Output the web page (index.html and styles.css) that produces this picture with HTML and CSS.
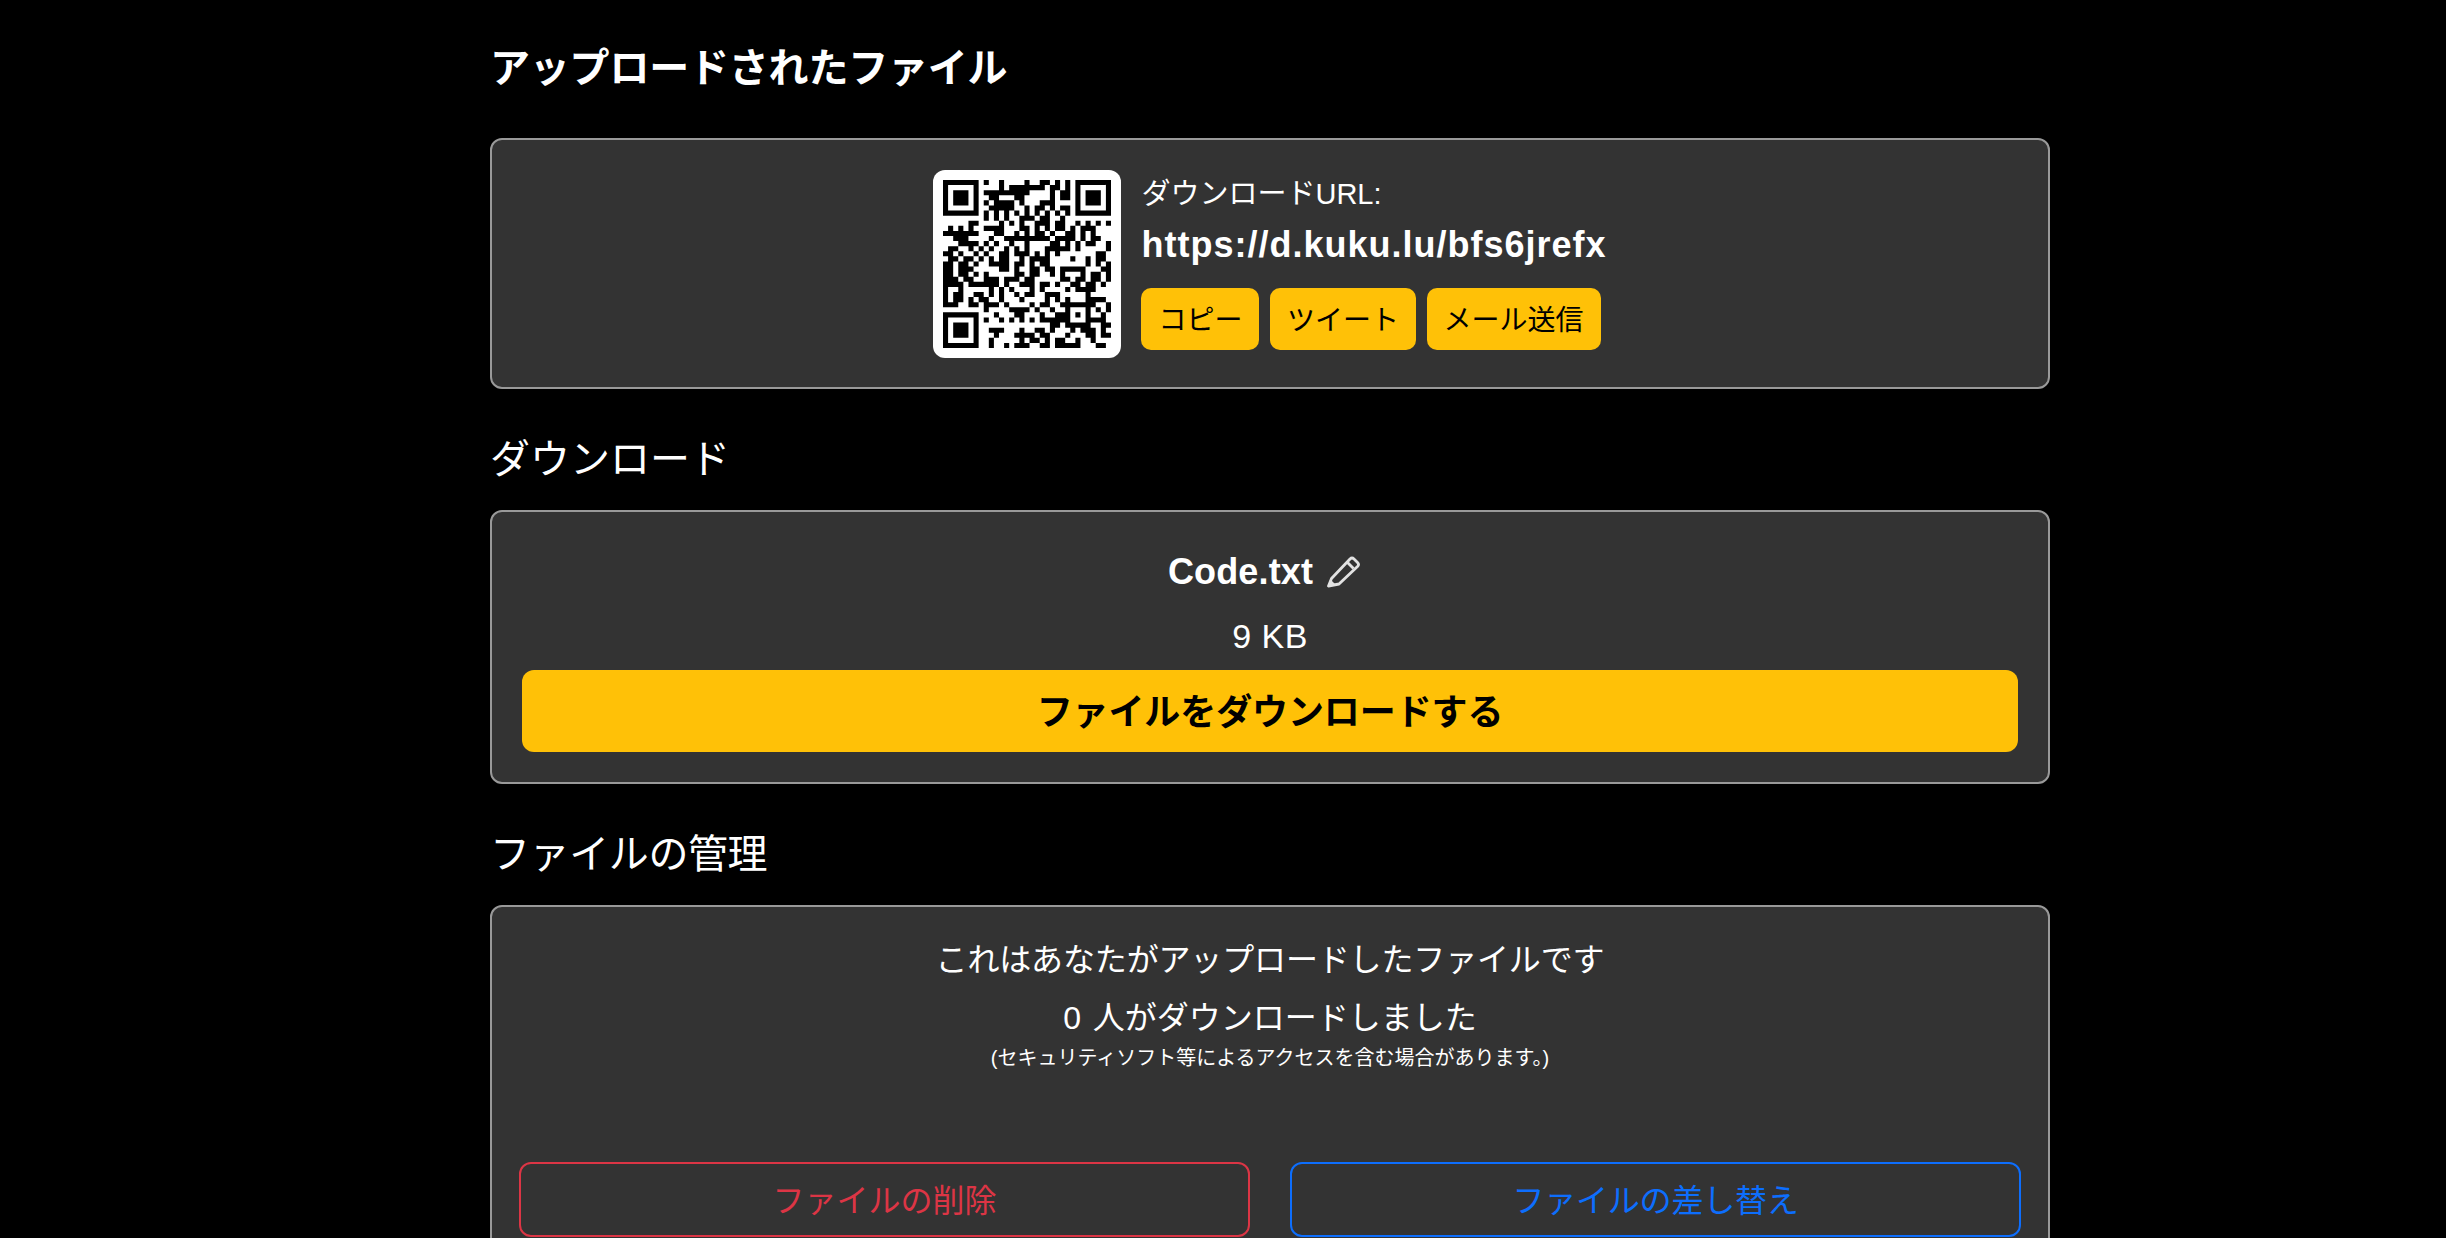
FILE: index.html
```html
<!DOCTYPE html>
<html lang="ja">
<head>
<meta charset="utf-8">
<title>アップロードされたファイル</title>
<link rel="stylesheet" href="styles.css">
</head>
<body>
<main class="page">
  <h1 class="title">アップロードされたファイル</h1>
  <section class="card share">
    <div class="qr"><svg class="qr-code" id="qr" viewBox="0 0 33 33"></svg></div>
    <div class="share-info">
      <div class="share-label">ダウンロードURL:</div>
      <div class="share-url">https://d.kuku.lu/bfs6jrefx</div>
      <div class="share-actions">
        <button class="btn-small">コピー</button>
        <button class="btn-small">ツイート</button>
        <button class="btn-small">メール送信</button>
      </div>
    </div>
  </section>
  <h2 class="section-title wide">ダウンロード</h2>
  <section class="card center">
    <div class="file-name">Code.txt
      <svg class="pencil" viewBox="6 5 34 34"><path class="pencil-line" d="M8.5 36 L11.5 28.5 L30 9 Q32 7 34 9 L37.5 12.5 Q39.5 14.5 37.5 16.5 L19 34 Z"/><path class="pencil-line" d="M27.5 12.5 L33.5 18.5"/><path class="pencil-tip" d="M7.5 37 L10.5 29.5 L15.5 34.5 Z"/></svg>
    </div>
    <div class="file-size">9 KB</div>
    <button class="btn-download">ファイルをダウンロードする</button>
  </section>
  <h2 class="section-title">ファイルの管理</h2>
  <section class="card center manage">
    <div class="line intro">これはあなたがアップロードしたファイルです</div>
    <div class="line count">0 人がダウンロードしました</div>
    <div class="note">(セキュリティソフト等によるアクセスを含む場合があります。)</div>
    <div class="manage-actions">
      <button class="btn-outline danger">ファイルの削除</button>
      <button class="btn-outline primary">ファイルの差し替え</button>
    </div>
  </section>
</main>
<script src="qr.js"></script>
</body>
</html>
```
FILE: styles.css
```css
* { box-sizing: border-box; }
html { overflow: hidden; background: #000; }
body {
  margin: 0;
  background: #000;
  color: #fff;
  font-family: "Liberation Sans", "Noto Sans CJK JP", sans-serif;
  font-size: 32px;
}
button { font-family: inherit; border: 0; cursor: pointer; }
.page { width: 1560px; margin-left: 490px; padding-top: 38px; }
.title { margin: 0 0 40px; font-size: 40px; line-height: 60px; font-weight: 700; letter-spacing: -0.2px; }
.section-title { margin: 40px 0 21px; font-size: 40px; line-height: 60px; font-weight: 400; letter-spacing: -0.4px; }
.wide { letter-spacing: 0; }
.card { background: #333; border: 2px solid #999; border-radius: 12px; padding: 30px; }
.center { text-align: center; }
.share { display: flex; justify-content: center; align-items: flex-start; gap: 20px; height: 251px; }
.qr { width: 188px; height: 188px; background: #fff; border-radius: 12px; display: flex; align-items: center; justify-content: center; }
.qr-code { width: 168px; height: 168px; display: block; }
.share-label { font-size: 29px; line-height: 48px; }
.share-url { font-size: 36px; font-weight: 700; line-height: 54px; letter-spacing: 1px; }
.share-actions { display: flex; gap: 10.5px; margin-top: 16px; }
.btn-small { height: 62px; padding: 0 17px 3px; background: #ffc107; color: #000; font-size: 28px; border-radius: 10px; }
.file-name { font-size: 36px; font-weight: 700; line-height: 60px; display: flex; justify-content: center; align-items: center; gap: 13px; margin-bottom: 10px; letter-spacing: 0.15px; }
.pencil { width: 34px; height: 34px; margin-right: 12px; }
.pencil-line { fill: none; stroke: #e2e2e2; stroke-width: 2.8; stroke-linejoin: round; }
.pencil-tip { fill: #e2e2e2; }
.file-size { font-size: 34px; line-height: 48px; margin-bottom: 10px; letter-spacing: 0.5px; }
.btn-download { display: block; width: 100%; height: 82px; padding: 0 0 4px; background: #ffc107; color: #000; font-size: 36px; font-weight: 700; border-radius: 12px; letter-spacing: -0.1px; }
.manage { padding-top: 29px; }
.line { line-height: 48px; margin-bottom: 10px; }
.intro { letter-spacing: -0.15px; }
.count { margin-bottom: 1px; word-spacing: 3px; }
.note { font-size: 20px; line-height: 30px; }
.manage-actions { display: flex; gap: 40px; margin: 89px -3px 0; }
.btn-outline { flex: 1; height: 75px; padding: 0 0 3px; background: transparent; border: 2px solid; border-radius: 12px; font-size: 32px; }
.danger { color: #dc3545; }
.primary { color: #0d6efd; letter-spacing: -0.2px; }
```
FILE: qr.js
```js
(function () {
  var TEXT = "https://d.kuku.lu/bfs6jrefx";
  var SIZE = 33, DATA_LEN = 36, BLOCKS = 4, ECC = 16, MASK = 5;

  var EXP = [], LOG = [];
  for (var i = 0, v = 1; i < 255; i++) {
    EXP[i] = v; LOG[v] = i;
    v <<= 1; if (v & 256) v ^= 0x11d;
  }
  function mul(a, b) { return a && b ? EXP[(LOG[a] + LOG[b]) % 255] : 0; }

  function generator(deg) {
    var g = [1];
    for (var i = 0; i < deg; i++) {
      var n = new Array(g.length + 1).fill(0);
      for (var j = 0; j < g.length; j++) {
        n[j] ^= g[j];
        n[j + 1] ^= mul(g[j], EXP[i]);
      }
      g = n;
    }
    return g;
  }

  function remainder(data, deg) {
    var g = generator(deg), r = data.concat(new Array(deg).fill(0));
    for (var i = 0; i < data.length; i++) {
      var c = r[i];
      if (c) for (var j = 0; j < g.length; j++) r[i + j] ^= mul(g[j], c);
    }
    return r.slice(data.length);
  }

  function codewords() {
    var bits = [];
    function put(val, n) { for (var i = n - 1; i >= 0; i--) bits.push((val >> i) & 1); }
    put(4, 4); put(TEXT.length, 8);
    for (var i = 0; i < TEXT.length; i++) put(TEXT.charCodeAt(i), 8);
    put(0, 4);
    while (bits.length % 8) bits.push(0);
    var out = [];
    for (i = 0; i < bits.length; i += 8) out.push(parseInt(bits.slice(i, i + 8).join(""), 2));
    for (var p = 0xec; out.length < DATA_LEN; p ^= 0xfd) out.push(p);
    var per = DATA_LEN / BLOCKS, blocks = [], eccs = [];
    for (i = 0; i < BLOCKS; i++) {
      var b = out.slice(i * per, (i + 1) * per);
      blocks.push(b); eccs.push(remainder(b, ECC));
    }
    var res = [];
    for (i = 0; i < per; i++) for (var k = 0; k < BLOCKS; k++) res.push(blocks[k][i]);
    for (i = 0; i < ECC; i++) for (k = 0; k < BLOCKS; k++) res.push(eccs[k][i]);
    return res;
  }

  function masked(x, y) { return x * y % 2 + x * y % 3 == 0; }

  function build() {
    var m = [], fn = [];
    for (var y = 0; y < SIZE; y++) { m.push(new Array(SIZE).fill(false)); fn.push(new Array(SIZE).fill(false)); }
    function set(x, y, d) { m[y][x] = !!d; fn[y][x] = true; }
    function finder(cx, cy) {
      for (var dy = -4; dy <= 4; dy++) for (var dx = -4; dx <= 4; dx++) {
        var xx = cx + dx, yy = cy + dy, d = Math.max(Math.abs(dx), Math.abs(dy));
        if (xx >= 0 && xx < SIZE && yy >= 0 && yy < SIZE) set(xx, yy, d != 2 && d != 4);
      }
    }
    for (var i = 0; i < SIZE; i++) { set(6, i, i % 2 == 0); set(i, 6, i % 2 == 0); }
    finder(3, 3); finder(SIZE - 4, 3); finder(3, SIZE - 4);
    for (var dy = -2; dy <= 2; dy++) for (var dx = -2; dx <= 2; dx++)
      set(26 + dx, 26 + dy, Math.max(Math.abs(dx), Math.abs(dy)) != 1);

    var data = (2 << 3) | MASK, rem = data;
    for (i = 0; i < 10; i++) rem = (rem << 1) ^ ((rem >> 9) * 0x537);
    var bits = ((data << 10) | rem) ^ 0x5412;
    function bit(n) { return (bits >> n) & 1; }
    for (i = 0; i <= 5; i++) set(8, i, bit(i));
    set(8, 7, bit(6)); set(8, 8, bit(7)); set(7, 8, bit(8));
    for (i = 9; i < 15; i++) set(14 - i, 8, bit(i));
    for (i = 0; i < 8; i++) set(SIZE - 1 - i, 8, bit(i));
    for (i = 8; i < 15; i++) set(8, SIZE - 15 + i, bit(i));
    set(8, SIZE - 8, 1);

    var cw = codewords(), n = 0;
    for (var right = SIZE - 1; right >= 1; right -= 2) {
      if (right == 6) right = 5;
      for (var vert = 0; vert < SIZE; vert++) for (var j = 0; j < 2; j++) {
        var x = right - j, up = ((right + 1) & 2) == 0, yy = up ? SIZE - 1 - vert : vert;
        if (!fn[yy][x] && n < cw.length * 8) {
          m[yy][x] = ((cw[n >> 3] >> (7 - (n & 7))) & 1) == 1;
          n++;
        }
        if (!fn[yy][x] && masked(x, yy)) m[yy][x] = !m[yy][x];
      }
    }
    return m;
  }

  var m = build(), d = "";
  for (var y = 0; y < SIZE; y++) for (var x = 0; x < SIZE; x++)
    if (m[y][x]) d += "M" + x + " " + y + "h1v1h-1z";
  var p = document.createElementNS("http://www.w3.org/2000/svg", "path");
  p.setAttribute("d", d);
  document.getElementById("qr").appendChild(p);
})();
```
